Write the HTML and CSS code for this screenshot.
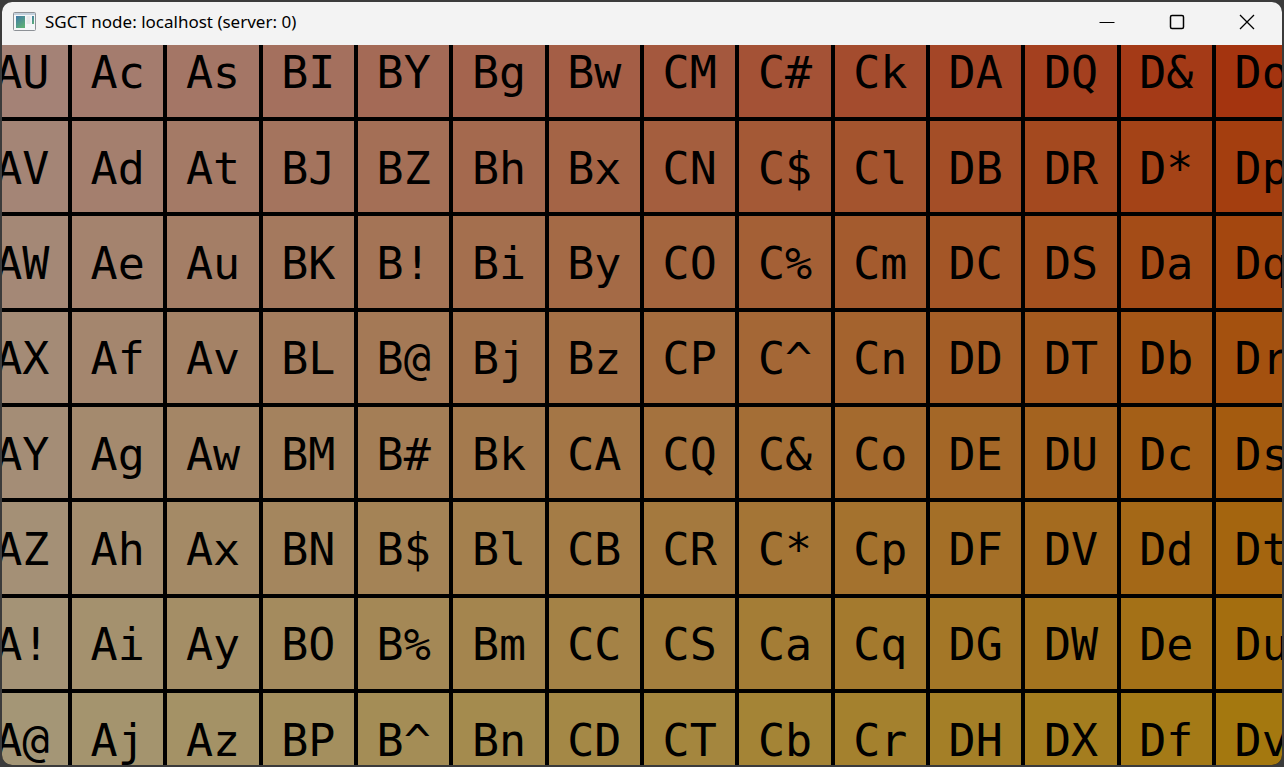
FILE: index.html
```html
<!DOCTYPE html>
<html lang="en">
<head>
<meta charset="utf-8">
<title>SGCT node: localhost (server: 0)</title>
<link rel="stylesheet" href="styles.css">
</head>
<body>
<main class="window">
  <header class="titlebar">
    <svg class="app-icon" viewBox="0 0 24 20" aria-hidden="true">
      <defs><linearGradient id="pane" x1="0" y1="0" x2="0.6" y2="1"><stop offset="0" stop-color="#3f78a8"/><stop offset="1" stop-color="#5cae78"/></linearGradient></defs>
      <rect x="0.5" y="0.5" width="22" height="18" rx="1" fill="#f4f6f8" stroke="#8d9196"/>
      <path d="M1 2h21" stroke="#c3d0dc" stroke-width="2"/>
      <rect x="3" y="4" width="9" height="12" fill="url(#pane)"/>
      <rect x="13.500" y="4" width="4" height="8" fill="#e6e8ea"/>
      <rect x="19" y="4" width="2" height="8" fill="url(#pane)"/>
    </svg>
    <h1 class="title">SGCT node: localhost (server: 0)</h1>
    <button class="control" aria-label="Minimize"><svg viewBox="0 0 16 16"><path d="M0.5 8.500h15"/></svg></button>
    <button class="control" aria-label="Maximize"><svg viewBox="0 0 16 16"><rect x="1.500" y="1.500" width="13" height="13" rx="1.500" stroke-width="1.500"/></svg></button>
    <button class="control" aria-label="Close"><svg viewBox="0 0 16 16"><path d="M1 1l14 14M15 1L1 15" stroke-width="1.300"/></svg></button>
  </header>
  <section class="viewport"><div class="pattern" id="pattern"></div></section>
</main>
<script src="pattern.js"></script>
</body>
</html>
```
FILE: styles.css
```css
* { box-sizing: border-box; }
body {
  margin: 0;
  height: 100vh;
  padding: 2px;
  background: #3b3b3b;
}
.window {
  display: flex;
  flex-direction: column;
  height: 100%;
  border-radius: 10px;
  overflow: hidden;
  background: #000;
}
.titlebar {
  display: flex;
  align-items: center;
  flex: none;
  height: 43px;
  padding: 0 0 3px 11px;
  background: #f3f3f3;
  color: #000;
}
.app-icon { width: 24px; height: 20px; }
.title {
  flex: 1;
  margin: 0 0 0 8px;
  font: 400 17px/24px "Noto Sans", "Open Sans", sans-serif;
}
.control {
  display: flex;
  align-items: center;
  justify-content: center;
  width: 70px;
  height: 100%;
  padding: 0;
  border: 0;
  background: none;
}
.control svg {
  width: 16px;
  height: 16px;
  fill: none;
  stroke: #000;
}
.viewport {
  flex: 1;
  min-height: 0;
  display: flex;
  align-items: center;
  justify-content: center;
  overflow: hidden;
}
.pattern {
  flex: none;
  display: grid;
  grid-template-columns: repeat(14, 1fr);
  grid-template-rows: repeat(8, 1fr);
  width: 104.27%;
  height: 105.93%;
}
.cell {
  display: flex;
  align-items: center;
  justify-content: center;
  padding-top: 4px;
  border: 2px solid #000;
  font: 400 45px/60px "DejaVu Sans Mono", "Liberation Mono", monospace;
  color: #000;
}
```
FILE: pattern.js
```js
const rows = [
  "AU Ac As BI BY Bg Bw CM C# Ck DA DQ D& Do",
  "AV Ad At BJ BZ Bh Bx CN C$ Cl DB DR D* Dp",
  "AW Ae Au BK B! Bi By CO C% Cm DC DS Da Dq",
  "AX Af Av BL B@ Bj Bz CP C^ Cn DD DT Db Dr",
  "AY Ag Aw BM B# Bk CA CQ C& Co DE DU Dc Ds",
  "AZ Ah Ax BN B$ Bl CB CR C* Cp DF DV Dd Dt",
  "A! Ai Ay BO B% Bm CC CS Ca Cq DG DW De Du",
  "A@ Aj Az BP B^ Bn CD CT Cb Cr DH DX Df Dv"
];
const pattern = document.getElementById("pattern");

function shade(row, col) {
  const value = 164;
  const saturation = 0.28 + col * 0.0485;
  const hue = 15 + row * 3.9;
  const low = value * (1 - saturation);
  const mid = low + (value - low) * hue / 60;
  return `rgb(${value}, ${Math.round(mid)}, ${Math.round(low)})`;
}

rows.forEach((line, row) => {
  line.split(" ").forEach((label, col) => {
    const cell = document.createElement("div");
    cell.className = "cell";
    cell.textContent = label;
    cell.style.backgroundColor = shade(row, col);
    pattern.append(cell);
  });
});
```
